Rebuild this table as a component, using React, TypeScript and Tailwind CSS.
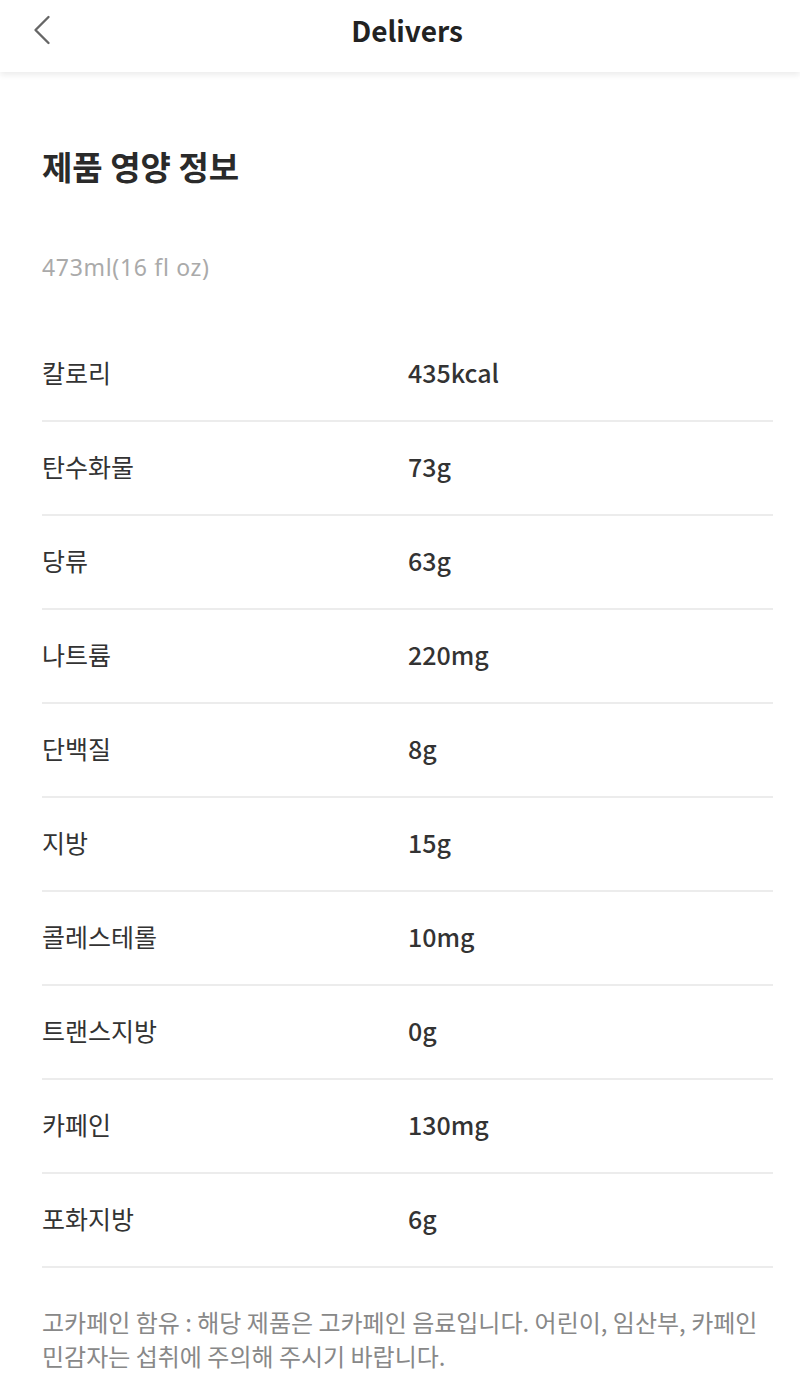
import { ChevronLeft } from "lucide-react";

const nutrients = [
  ["칼로리", "435kcal"],
  ["탄수화물", "73g"],
  ["당류", "63g"],
  ["나트륨", "220mg"],
  ["단백질", "8g"],
  ["지방", "15g"],
  ["콜레스테롤", "10mg"],
  ["트랜스지방", "0g"],
  ["카페인", "130mg"],
  ["포화지방", "6g"],
];

export default function App() {
  return (
    <div className="min-h-[1400px] bg-white font-['Noto_Sans_CJK_KR','Noto_Sans',sans-serif] text-[#222]">
      <header className="relative flex h-[72px] items-center justify-center bg-white shadow-[0_3px_6px_rgba(0,0,0,0.08)]">
        <button className="absolute left-[16px] top-[4px] text-[#666]" aria-label="Back">
          <ChevronLeft size={52} strokeWidth={1.1} />
        </button>
        <h1 className="-mt-[12px] ml-[14px] text-[28px] font-bold text-[#222]">
          Delivers
        </h1>
      </header>

      <main className="px-[42px] pt-[78px]">
        <h2 className="text-[33px] font-bold leading-none text-[#2a2a2a]">
          제품 영양 정보
        </h2>
        <p className="mt-[73px] font-['Noto_Sans',sans-serif] text-[23px] leading-none tracking-[0.03em] text-[#aaa]">
          473ml(16 fl oz)
        </p>

        <div className="mt-[49px] mr-[-15px]">
          {nutrients.map(([label, value]) => (
            <div
              key={label}
              className="grid h-[94px] grid-cols-[366px_1fr] items-center border-b-2 border-[#ececec] pb-[2px] text-[25px] text-[#333]"
            >
              <span>{label}</span>
              <span className="font-medium">{value}</span>
            </div>
          ))}
        </div>

        <p className="mt-[37px] text-[24px] leading-[34px] text-[#888]">
          고카페인 함유 : 해당 제품은 고카페인 음료입니다. 어린이, 임산부, 카페인
          <br />
          민감자는 섭취에 주의해 주시기 바랍니다.
        </p>
      </main>
    </div>
  );
}
